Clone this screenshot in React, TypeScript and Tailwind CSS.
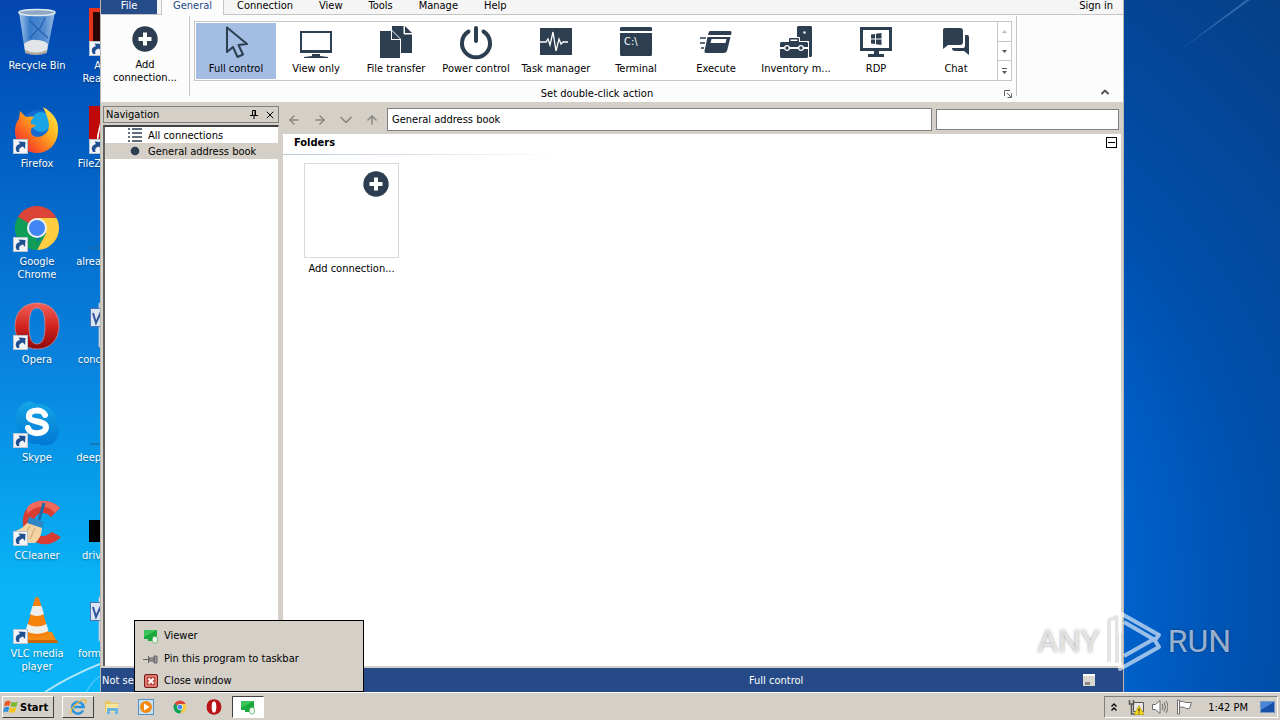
import type { ReactNode } from 'react';
import { ArrowLeft, ArrowRight, ArrowUp, ChevronDown, ChevronUp, X } from 'lucide-react';

const INK = '#2c3e50';

function PlusCircle(): ReactNode {
  return (
    <svg viewBox="0 0 26 26" className="size-[26px]">
      <circle cx="13" cy="13" r="12.7" fill={INK} />
      <path d="M13 6.5v13M6.5 13h13" stroke="#fff" strokeWidth="4" />
    </svg>
  );
}

function ShortcutArrow(): ReactNode {
  return (
    <svg viewBox="0 0 15 15" className="absolute bottom-0 left-0 size-[15px]">
      <rect x=".5" y=".5" width="14" height="14" fill="#f2f4f7" stroke="#b9c4d2" />
      <path d="M4 13C1.500 9 3 6 7 5L5.500 2.500 12.500 3 12 10 10 7.500C7 8 5.500 10 6.500 13Z" fill="#1d4f91" />
    </svg>
  );
}

const desktopArt: Record<string, ReactNode> = {
  bin: (
    <>
      <defs>
        <linearGradient id="bin" x1="0" x2="1">
          <stop offset="0" stopColor="#b8d5ef" />
          <stop offset=".3" stopColor="#3f80cc" />
          <stop offset=".7" stopColor="#5b93d4" />
          <stop offset="1" stopColor="#a9cbe9" />
        </linearGradient>
      </defs>
      <path d="M6 4 12 44Q24 49 34 44L42 4Z" fill="url(#bin)" opacity=".9" />
      <path d="M11 36q6-5 12-4 8 0 12 4l-1 7q-10 5-22 0Z" fill="#e3e6e8" />
      <path d="M12 42q12 5 22 0v3q-11 4-22 0Z" fill="#b0a99e" />
      <path d="m16 12 9 9-8 9M32 10l-6 12 9 8" stroke="#2a66b5" strokeWidth="1.500" fill="none" />
      <ellipse cx="24" cy="4.500" rx="18" ry="3" fill="#8fa7c0" stroke="#dfe9f3" strokeWidth="1.500" />
    </>
  ),
  firefox: (
    <>
      <defs>
        <linearGradient id="fox" x1="1" y1="0" x2="0" y2="1">
          <stop offset="0" stopColor="#fff04a" />
          <stop offset=".4" stopColor="#ffb01f" />
          <stop offset=".7" stopColor="#fb5a22" />
          <stop offset="1" stopColor="#e01560" />
        </linearGradient>
      </defs>
      <circle cx="25" cy="22" r="18" fill="#1769d2" />
      <circle cx="28" cy="16" r="10" fill="#18a4e6" />
      <path d="M30 1c11 6 16 14 15 25-1 13-10 21-21 21S2 38 2 26c0-7 2-11 4-13l1-8 6 6q5-1 8 0-4 4-3 7l5 1-5 4q-1 8 7 8 11-2 11-12-1-8-6-18Z" fill="url(#fox)" />
    </>
  ),
  chrome: (
    <>
      <path d="M24 24 4.900 13A22 22 0 0 1 43 13Z" fill="#db4437" />
      <path d="M24 24v22A22 22 0 0 1 4.900 13Z" fill="#0f9d58" />
      <path d="M24 14h19.600A22 22 0 0 1 24 46l9-17Z" fill="#ffcd40" />
      <path d="m33 29-9 17q-2 0-4-.5L28 32Z" fill="#0f9d58" />
      <circle cx="24" cy="24" r="10" fill="#f1f1f1" />
      <circle cx="24" cy="24" r="8" fill="#4285f4" />
    </>
  ),
  opera: (
    <>
      <defs>
        <linearGradient id="opera" x1="0" y1="0" x2="0" y2="1">
          <stop offset="0" stopColor="#f2625a" />
          <stop offset=".5" stopColor="#d3241f" />
          <stop offset="1" stopColor="#8e0b0d" />
        </linearGradient>
      </defs>
      <path fillRule="evenodd" d="M24 1C37 1 46 10 46 24S37 47 24 47 2 38 2 24 11 1 24 1Zm0 5c-6 0-8 7-8 18s2 18 8 18 8-7 8-18-2-18-8-18Z" fill="url(#opera)" stroke="#e9a09c" strokeWidth=".6" />
    </>
  ),
  skype: (
    <>
      <defs>
        <linearGradient id="skype" x1="0" y1="0" x2="0" y2="1">
          <stop offset="0" stopColor="#14a5e6" />
          <stop offset="1" stopColor="#0078d4" />
        </linearGradient>
      </defs>
      <path d="M14 2c4-1 7 0 9 2 12-1 21 7 21 20 4 6 2 15-4 19-4 3-10 3-14 1C14 45 4 36 4 24 1 14 5 5 14 2Z" fill="url(#skype)" />
      <path d="M32 15c-2-6-16-6-16 1-1 7 17 4 17 11 0 8-16 8-18 1" stroke="#fff" strokeWidth="6" strokeLinecap="round" fill="none" />
    </>
  ),
  ccleaner: (
    <>
      <path d="m47 10-9 9c-5-6-13-5-16 1-4 8 0 18 7 18 5 0 7-2 10-4l9 5c-7 7-16 9-23 6C13 41 7 29 11 16 15 3 36-2 47 10Z" fill="#d83c32" />
      <path d="M14 10C21 0 38 1 47 10l-5 5C34 6 23 7 14 16Z" fill="#ee685b" />
      <path d="M31 5 26 22" stroke="#1d6ca8" strokeWidth="3" />
      <path d="m16 19 15 5-2 6-15-5Z" fill="#2e86c5" />
      <path d="M14 25Q9 31 2 33l12 12h8q7-6 7-15Z" fill="#f3d3a2" />
      <path d="m17 28-6 10M22 30l-5 11" stroke="#cda06b" />
    </>
  ),
  vlc: (
    <>
      <path d="M11 36h28l5 10H5Z" fill="#f58b14" />
      <path d="M5 44h39l1 3H5Z" fill="#c96502" />
      <path d="M22 2q2-2 4 0l10 36q-12 6-24 0Z" fill="#f6820d" />
      <path d="m19.500 10-2.500 8q7 4 14 0l-2.500-8Zm-5 18-2 7q11 6 23 0l-2-7q-10 5-19 0Z" fill="#eeeeec" />
    </>
  ),
  pdf: (
    <>
      <rect width="48" height="46" fill="#e8321c" />
      <rect x="4" y="4" width="40" height="38" fill="#2a0606" />
    </>
  ),
  filezilla: (
    <>
      <rect width="48" height="46" fill="#bf0909" />
      <path d="M14 4 8 42V30L14 4Z" fill="#fff" />
    </>
  ),
  line: <path d="M1 44h40" stroke="#1e5f8f" />,
  word: (
    <>
      <path d="M10 1h36v44H10Z" fill="#f6f9fc" stroke="#9fb5cf" />
      <rect x="1.500" y="6.500" width="18" height="18" fill="#dbe6f5" stroke="#5572ac" />
      <path d="m4 11 3 10 4-9 3 9 3-10" stroke="#31549b" strokeWidth="2" fill="none" />
    </>
  ),
  black: <rect y="22" width="48" height="22" />,
};

type DesktopEntry = { art: string; label: string; shortcut?: boolean };

const firstColumn: DesktopEntry[] = [
  { art: 'bin', label: 'Recycle Bin' },
  { art: 'firefox', label: 'Firefox', shortcut: true },
  { art: 'chrome', label: 'Google Chrome', shortcut: true },
  { art: 'opera', label: 'Opera', shortcut: true },
  { art: 'skype', label: 'Skype', shortcut: true },
  { art: 'ccleaner', label: 'CCleaner', shortcut: true },
  { art: 'vlc', label: 'VLC media player', shortcut: true },
];

const secondColumn: DesktopEntry[] = [
  { art: 'pdf', label: 'A Rea', shortcut: true },
  { art: 'filezilla', label: 'FileZ', shortcut: true },
  { art: 'line', label: 'alrea' },
  { art: 'word', label: 'conc' },
  { art: 'line', label: 'deep' },
  { art: 'black', label: 'driv' },
  { art: 'word', label: 'form' },
];

function DesktopArt({ art, shortcut }: DesktopEntry): ReactNode {
  return (
    <span className="relative block size-12 shrink-0">
      <svg viewBox="0 0 48 48" className="size-12">
        {desktopArt[art]}
      </svg>
      {shortcut && <ShortcutArrow />}
    </span>
  );
}

const ribbonItems: { label: string; icon: ReactNode }[] = [
  {
    label: 'Full control',
    icon: <path d="M7 1.500V26l6-5 4.500 10 5.500-2.500L18.500 19l8.500-1Z" fill="none" stroke={INK} strokeWidth="2" strokeLinejoin="round" />,
  },
  {
    label: 'View only',
    icon: (
      <>
        <path fillRule="evenodd" d="M0 5h32v22H0Zm2 2v17h28V7Z" fill={INK} />
        <path d="M12 28h8v2l8 1v1H4v-1l8-1Z" fill={INK} />
      </>
    ),
  },
  {
    label: 'File transfer',
    icon: (
      <>
        <path d="M12 0h12v8h8v19H12Z" fill={INK} />
        <path d="M25 0v7h7Z" fill={INK} />
        <path d="M24 0v8h8" stroke="#fff" fill="none" />
        <path d="M-1 4h13l9 9v20H-1Z" fill="#fff" />
        <path d="M0 5h11v9h9v18H0Z" fill={INK} />
        <path d="M12 5v8h8Z" fill={INK} />
      </>
    ),
  },
  {
    label: 'Power control',
    icon: (
      <path d="M16 2v13M8.500 5.500a14 14 0 1 0 15 0" fill="none" stroke={INK} strokeWidth="4" strokeLinecap="round" />
    ),
  },
  {
    label: 'Task manager',
    icon: (
      <>
        <path d="M0 2h32v27H0Z" fill={INK} />
        <path d="M0 16h6l2-3 2 6 3-13 3 19 3-12 2 5 2-2h5" stroke="#fff" strokeWidth="1.300" fill="none" />
      </>
    ),
  },
  {
    label: 'Terminal',
    icon: (
      <>
        <path d="M1 1h30l1 1v3H0V2ZM0 7h32v22l-1 1H1l-1-1Z" fill={INK} />
        <text x="4" y="19" fill="#fff" fontSize="11">
          C:\
        </text>
      </>
    ),
  },
  {
    label: 'Execute',
    icon: (
      <>
        <path d="M10 5h20q2 0 1.500 2l-.5 2H8l.5-2Q9 5 10 5ZM7.500 11h23l-3.500 14q-1 2-3 2H6q-2 0-1.500-2Z" fill={INK} />
        <path d="M11.500 13h15l-1 4h-15Z" fill="#fff" />
        <path d="M0 12h6M0 17h5M1 22h3" stroke={INK} strokeWidth="1.300" />
      </>
    ),
  },
  {
    label: 'Inventory m...',
    icon: (
      <>
        <path d="M18 0h13l1 1v29l-1 1H17V1Z" fill={INK} />
        <circle cx="24.500" cy="6.500" r="1.200" fill="#fff" />
        <path d="M0 15h8v-3q0-1 1-1h10q1 0 1 1v3h9v18H-1Z" fill="#fff" />
        <path d="M9 16v-3q0-1 1-1h8q1 0 1 1v3M1 16h26l1 1v4H0v-4ZM0 23h28v8l-1 1H1l-1-1Z" fill={INK} />
        <path d="M10.500 13.500h7V15h-7Z" fill="#fff" />
        <circle cx="7" cy="22" r="2.300" fill={INK} stroke="#fff" strokeWidth="1.300" />
        <circle cx="21" cy="22" r="2.300" fill={INK} stroke="#fff" strokeWidth="1.300" />
      </>
    ),
  },
  {
    label: 'RDP',
    icon: (
      <>
        <path fillRule="evenodd" d="M0 1h32v24H0Zm3 3v18h26V4Z" fill={INK} />
        <path d="M14 25h5v3h5v3H8v-3h6Z" fill={INK} />
        <path d="m11 8.500 4-.5v4.500h-4Zm5-.7 5.500-.8v5.500H16ZM11 13.500h4V18l-4-.5Zm5 0h5.500V19l-5.500-.8Z" fill={INK} />
      </>
    ),
  },
  {
    label: 'Chat',
    icon: (
      <>
        <path d="M25 9h2q2 0 2 2v18l-5-4h-9q-3 0-3-3h11q2 0 2-2Z" fill={INK} />
        <path d="M5 2h15q3 0 3 3v11q0 3-3 3H8l-5 4V4q0-2 2-2Z" fill={INK} />
      </>
    ),
  },
];

const tabs = ['Connection', 'View', 'Tools', 'Manage', 'Help'];

function Ribbon(): ReactNode {
  return (
    <>
      <div className="flex h-[15px] items-start justify-between border-b border-[#c6c6c6] bg-[#f5f5f5]">
        <div className="flex">
          <button className="mr-1 h-[14px] w-14 bg-[#264c8a] pb-0.5 leading-3 text-white">File</button>
          <button className="h-[15px] border-x border-[#c6c6c6] bg-[#fcfcfc] px-[11px] pb-[3px] leading-3 text-[#264c8a]">General</button>
          {tabs.map((tab) => (
            <button key={tab} className="px-[13px] pb-[3px] leading-3">
              {tab}
            </button>
          ))}
        </div>
        <button className="mr-2.5 leading-3">Sign in</button>
      </div>
      <div className="flex h-[87px] bg-[#fcfcfc] pt-px">
        <button className="flex h-20 w-[89px] shrink-0 flex-col items-center border-r border-[#c6c6c6] pt-2.5">
          <PlusCircle />
          <span className="mt-1.5 w-[70px] leading-[13px]">Add connection...</span>
        </button>
        <div className="flex h-20 min-w-0 flex-col border-r border-[#c6c6c6] px-1 pt-[5px]">
          <div className="flex h-[60px] shrink-0 border border-[#c6c6c6] bg-white">
            <div className="flex p-px">
              {ribbonItems.map((item, i) => (
                <button
                  key={item.label}
                  className={`flex w-20 flex-col items-center pt-[3px] ${i === 0 ? 'bg-[#a3bde3]' : ''}`}
                >
                  <svg viewBox="0 0 32 32" className="size-8 overflow-visible">
                    {item.icon}
                  </svg>
                  <span className="mt-1 leading-[13px] whitespace-nowrap">{item.label}</span>
                </button>
              ))}
            </div>
            <div className="flex w-[14px] flex-col divide-y divide-[#c6c6c6] border-l border-[#c6c6c6]">
              <button aria-label="Scroll up" className="flex flex-1 items-center justify-center">
                <svg viewBox="0 0 5 3" className="h-[3px] w-[5px]"><path d="M0 3h5L2.500 0Z" fill="#bbb" /></svg>
              </button>
              <button aria-label="Scroll down" className="flex flex-1 items-center justify-center">
                <svg viewBox="0 0 5 3" className="h-[3px] w-[5px]"><path d="M0 0h5L2.500 3Z" fill="#555" /></svg>
              </button>
              <button aria-label="More actions" className="flex flex-1 items-center justify-center">
                <svg viewBox="0 0 5 6" className="h-[6px] w-[5px]"><path d="M0 0h5v1H0ZM0 3h5L2.500 6Z" fill="#555" /></svg>
              </button>
            </div>
          </div>
          <div className="flex shrink-0 items-center pt-1.5">
            <span className="flex-1 pr-1 text-center leading-[13px]">Set double-click action</span>
            <button aria-label="Dialog options">
              <svg viewBox="0 0 8 8" className="size-2" fill="none" stroke="#666">
                <path d="M.5 6V.5H6M3 3l4 4M7.500 3.500v4h-4" />
              </svg>
            </button>
          </div>
        </div>
        <button aria-label="Collapse ribbon" className="mr-3 mb-1 ml-auto flex items-end">
          <ChevronUp className="size-3" color="#555" strokeWidth={4} />
        </button>
      </div>
    </>
  );
}

function NavigationPanel(): ReactNode {
  return (
    <div className="flex w-[176px] flex-col pt-px">
      <div className="flex h-[17px] items-center border border-[#808080] px-0.5">
        <span className="flex-1">Navigation</span>
        <button aria-label="Pin panel" className="mr-1.5">
          <svg viewBox="0 0 8 9" className="h-[9px] w-2" stroke="#000" fill="none">
            <path d="M2.500 5V.5h3V5M5 0v5M0 5.500h8M4 6v3" />
          </svg>
        </button>
        <button aria-label="Close panel">
          <X className="size-3" strokeWidth={2} />
        </button>
      </div>
      <ul className="mt-0.5 flex-1 border-t-2 border-r border-l-2 border-t-[#404040] border-r-[#d4d0c8] border-l-[#606060] bg-white">
        <li className="flex h-4 items-center gap-1.5 pl-[23px]">
          <svg viewBox="0 0 14 14" className="size-3.5" stroke={INK} strokeWidth="1.500">
            <path d="M0 1h2M4 1h10M0 5h2M4 5h10M0 9h2M4 9h10M0 13h2M4 13h10" />
          </svg>
          All connections
        </li>
        <li className="flex h-4 items-center gap-1.5 bg-[#d4d0c8] pl-[23px]">
          <svg viewBox="0 0 14 14" className="size-3.5">
            <circle cx="7" cy="7" r="4.300" fill={INK} />
          </svg>
          General address book
        </li>
      </ul>
    </div>
  );
}

function AddressBook(): ReactNode {
  return (
    <div className="flex min-w-0 flex-1 flex-col">
      <div className="flex h-[29px] items-center pr-1 text-[#8a8680]">
        <button aria-label="Back" className="flex w-[26px] justify-center"><ArrowLeft className="size-3.5" strokeWidth={2.5} /></button>
        <button aria-label="Forward" className="flex w-[26px] justify-center"><ArrowRight className="size-3.5" strokeWidth={2.5} /></button>
        <button aria-label="History" className="flex w-[26px] justify-center"><ChevronDown className="size-5" strokeWidth={2} /></button>
        <button aria-label="Up" className="flex w-[26px] justify-center"><ArrowUp className="size-3.5" strokeWidth={2.5} /></button>
        <input
          aria-label="Address"
          defaultValue="General address book"
          className="mr-1 ml-0.5 h-[23px] min-w-0 flex-1 border border-[#808080] bg-white px-1 text-black"
        />
        <input aria-label="Search" className="h-[21px] w-[183px] border border-[#808080] bg-white px-1 text-black" />
      </div>
      <section className="mx-0.5 flex-1 bg-white">
        <header className="flex h-5 items-center justify-between pr-1 pb-1 pl-[11px]">
          <h2 className="font-bold">Folders</h2>
          <button aria-label="Collapse folders" className="flex size-[11px] items-center border border-black px-px">
            <span className="h-px flex-1 bg-black" />
          </button>
        </header>
        <div className="h-px w-[280px] bg-linear-to-r from-[#b9cadd] to-white" />
        <button className="mt-2 ml-[21px] flex w-[95px] flex-col items-center">
          <span className="flex h-[95px] w-full justify-end border border-[#d9d9d9] pt-[7px] pr-[9px]">
            <PlusCircle />
          </span>
          <span className="mt-1 leading-[13px]">Add connection...</span>
        </button>
      </section>
    </div>
  );
}

function ViewerGlyph(): ReactNode {
  return (
    <svg viewBox="0 0 16 16" className="size-4">
      <path d="M1 2h13v9H1Z" fill="#19a83b" />
      <path d="M1 2h13L1 9Z" fill="#3cc45a" />
      <path d="M5 11h4v2H5Z" fill="#19a83b" />
      <rect x="9.500" y="8.500" width="5" height="6.500" rx="2" fill="#eaf8ec" stroke="#4cab5c" strokeWidth=".7" />
    </svg>
  );
}

function JumpList(): ReactNode {
  return (
    <div className="absolute bottom-0 left-[134px] flex h-[72px] w-[230px] flex-col border border-black bg-[#d4d0c8] pt-[3px] pl-2">
      <button className="flex h-[23px] items-center gap-[5px]">
        <ViewerGlyph />
        Viewer
      </button>
      <button className="flex h-[23px] items-center gap-[5px]">
        <svg viewBox="0 0 16 16" className="size-4" fill="#999" stroke="#666">
          <path d="M0 8.500h5M5.500 5v7M6 7h5v3H6ZM11 5h3v7h-3Z" />
        </svg>
        Pin this program to taskbar
      </button>
      <button className="flex h-[21px] items-center gap-[5px]">
        <svg viewBox="0 0 16 16" className="size-4">
          <rect x="1.500" y="1.500" width="13" height="13" rx="1.500" fill="#c34a40" stroke="#7c1d18" />
          <rect x="3" y="3" width="10" height="10" fill="none" stroke="#eba49c" />
          <path d="m5.500 5.500 5 5m0-5-5 5" stroke="#fff" strokeWidth="2" />
        </svg>
        Close window
      </button>
    </div>
  );
}

function Taskbar(): ReactNode {
  return (
    <div className="flex h-7 items-center border-t border-white bg-[#d4d0c8] pt-px pr-0.5 pl-0.5">
      <button className="mr-2 flex h-[22px] w-[52px] items-center gap-px border border-t-white border-r-[#404040] border-b-[#404040] border-l-white font-bold">
        <svg viewBox="0 0 16 16" className="size-4">
          <path d="M2 3q3-2 5.500-.5L6.500 7Q4 6 1 7.500Z" fill="#ea5b26" />
          <path d="M8.500 3q3 1 6-.5l-1 5q-3 1-6-.3Z" fill="#7db72f" />
          <path d="M1 9q3-2 5.300-.8L5 13q-2.500-1-5 .5Z" fill="#2f8fd8" />
          <path d="M7.300 8.500q3 1 6-.3l-1.300 5q-3 1-6-.2Z" fill="#f8c21d" />
        </svg>
        Start
      </button>
      <div className="flex flex-1 items-center gap-0.5">
        <button aria-label="Internet Explorer" className="flex h-[22px] w-8 items-center justify-center border border-t-white border-r-[#404040] border-b-[#404040] border-l-white">
          <svg viewBox="0 0 18 18" className="size-[18px]" fill="none">
            <path d="M14 12.500a5.800 5.800 0 1 1 .6-3.500H5" stroke="#2b93dc" strokeWidth="2.500" />
            <path d="M2 16C-1 13 10 1 16 2q2 .5 0 4" stroke="#e9b93c" strokeWidth="1.300" />
          </svg>
        </button>
        <button aria-label="Windows Explorer" className="flex w-8 justify-center">
          <svg viewBox="0 0 16 16" className="size-4">
            <path d="M1 2h5l1 2h7v9H1Z" fill="#e9c75a" />
            <path d="M2 5h12v8H2Z" fill="#f9e49a" />
            <path d="M3 15V9h11v6h-3v-3H6v3Z" fill="#6bb5e4" />
          </svg>
        </button>
        <button aria-label="Media Player" className="flex w-8 justify-center">
          <svg viewBox="0 0 16 16" className="size-4">
            <rect x=".5" y=".5" width="15" height="15" fill="#c8e2f5" stroke="#5791c4" />
            <circle cx="8" cy="8" r="6" fill="#f28b12" />
            <path d="m6 4.500 5.500 3.500L6 11.500Z" fill="#fff" />
          </svg>
        </button>
        <button aria-label="Chrome" className="flex w-8 justify-center">
          <svg viewBox="0 0 48 48" className="size-3.5">{desktopArt.chrome}</svg>
        </button>
        <button aria-label="Opera" className="flex w-8 justify-center">
          <svg viewBox="0 0 48 48" className="size-4">
            <ellipse cx="24" cy="24" rx="12" ry="20" fill="#fff" />
            <path fillRule="evenodd" d="M24 1C37 1 46 10 46 24S37 47 24 47 2 38 2 24 11 1 24 1Zm0 6c-5 0-7 7-7 17s2 17 7 17 7-7 7-17-2-17-7-17Z" fill="#b81416" />
          </svg>
        </button>
        <button aria-label="Viewer" className="flex h-[22px] w-8 items-center justify-center border border-t-[#404040] border-r-white border-b-white border-l-[#404040] bg-white">
          <ViewerGlyph />
        </button>
      </div>
      <div className="flex h-[22px] items-center border border-t-[#808080] border-r-white border-b-white border-l-[#808080] pr-0.5 pl-1.5">
        <button aria-label="Show hidden icons" className="mr-[11px]">
          <svg viewBox="0 0 6 8" className="h-2 w-1.5" fill="none" stroke="#000" strokeWidth="1.300">
            <path d="m.5 3.500 2.500-2.500 2.500 2.500M.5 7.500 3 5l2.500 2.500" />
          </svg>
        </button>
        <svg viewBox="0 0 16 16" className="mr-2 size-4">
          <path d="M5.500 3.500h10v9h-10Z" fill="#e6e6e6" stroke="#555" />
          <path d="M1.500 1v4h4V1M3.500 5v10h4" fill="none" stroke="#555" strokeWidth="1.500" />
          <path d="m11 6.500 5 9H6Z" fill="#fbd91c" stroke="#aa8605" strokeWidth=".6" />
          <path d="M11 9.500v3m0 1v1" stroke="#000" />
        </svg>
        <svg viewBox="0 0 16 16" className="mr-2 size-4" fill="none" stroke="#6d6d6d">
          <path d="M.5 5.500h3L8 1.500v13l-4.500-4h-3Z" fill="#fff" />
          <path d="M10 5q2 3 0 6M12 3.500q3 4.500 0 9M14 2q4 6 0 12" />
        </svg>
        <svg viewBox="0 0 16 16" className="mr-4 size-4" fill="#fff" stroke="#6d6d6d">
          <path d="M1.500 1v14h2V1ZM3.500 2.500q3-1 6 1h6l-2 6q-3 1-5-1-3-1-5 0Z" />
        </svg>
        <time className="mr-3">1:42 PM</time>
        <button aria-label="Show desktop">
          <svg viewBox="0 0 15 13" className="h-[13px] w-[15px]">
            <rect x=".5" y=".5" width="14" height="11" fill="#164fa8" stroke="#7796c4" />
            <path d="M1 1h13L1 9Z" fill="#4886d8" />
          </svg>
        </button>
      </div>
    </div>
  );
}

function Watermark(): ReactNode {
  return (
    <div className="pointer-events-none absolute right-[49px] bottom-5 flex items-center gap-1.5 font-['Roboto',sans-serif] text-[32px] leading-none text-white/60 [text-shadow:0_0_3px_#0006]">
      <span>ANY</span>
      <svg viewBox="0 0 56 62" className="h-[62px] w-14" fill="none" stroke="#fff" strokeOpacity=".6" strokeWidth="4" strokeLinejoin="round">
        <path d="M3 52V10l8-3v46" stroke="#c4c4c4" strokeOpacity=".45" />
        <path d="M14 24V3l39 22-4 5L18 12M18 46l30-17 5 8-39 22v-7" />
      </svg>
      <span>RUN</span>
    </div>
  );
}

export default function App() {
  return (
    <div className="flex h-screen flex-col overflow-hidden font-['DejaVu_Sans_Condensed','DejaVu_Sans',sans-serif] text-[11px] leading-[13px] text-black">
      <main className="relative min-h-0 flex-1 overflow-hidden bg-[radial-gradient(ellipse_at_50%_85%,#12b8fa_0%,#0a9cee_36%,#0064cf_52%,#0050ae_68%,#063f86_100%)]">
        <div className="absolute inset-y-0 left-0 w-25 bg-linear-to-b from-[#0446b0] via-[#0a80dc] via-50% to-[#0ab4f6] to-85%" />
        <svg viewBox="0 0 160 720" className="absolute top-0 right-0 h-[720px] w-40">
          <path d="M60 50 130 0h-4Z" fill="#6fa3d8" opacity=".4" />
        </svg>
        <svg viewBox="0 0 100 50" className="absolute bottom-0 left-0 h-[50px] w-25" fill="none" stroke="#d9f4ff">
          <path d="M45 50Q70 34 100 22" strokeWidth="2" opacity=".8" />
          <path d="M86 50q6-11 14-16" opacity=".5" />
        </svg>

        <div className="relative flex pt-2 text-white [text-shadow:0_1px_2px_#0006]">
          <ul className="w-[74px]">
            {firstColumn.map((entry) => (
              <li key={entry.label} className="flex h-[98px] flex-col items-center gap-[3px] text-center">
                <DesktopArt {...entry} />
                <span className="w-16">{entry.label}</span>
              </li>
            ))}
          </ul>
          <ul className="w-[27px] overflow-hidden">
            {secondColumn.map((entry) => (
              <li key={entry.label} className="flex h-[98px] flex-col gap-[3px] text-right">
                <div className="pl-[15px]">
                  <DesktopArt {...entry} />
                </div>
                <span>{entry.label}</span>
              </li>
            ))}
          </ul>
        </div>

        <div className="absolute inset-y-0 right-[156px] left-25 flex flex-col border-x border-[#bab7b0] bg-[#d4d0c8]">
          <Ribbon />
          <div className="flex min-h-0 flex-1 gap-0.5 pt-[3px] pb-0.5 pl-0.5">
            <NavigationPanel />
            <AddressBook />
          </div>
          <footer className="flex h-6 items-center justify-between bg-[#264a87] pr-7 pl-px text-white">
            <span className="flex-1">Not se</span>
            <span className="w-[334px]">Full control</span>
            <svg viewBox="0 0 12 12" className="size-3">
              <path d="M0 0h12v12H0Z" fill="#d8d8d0" />
              <path d="M2 8h5v3H2Z" fill="#8a8a85" />
              <path d="M0 0h12v2H0Z" fill="#fff" />
            </svg>
          </footer>
        </div>

        <JumpList />
        <Watermark />
      </main>
      <Taskbar />
    </div>
  );
}
